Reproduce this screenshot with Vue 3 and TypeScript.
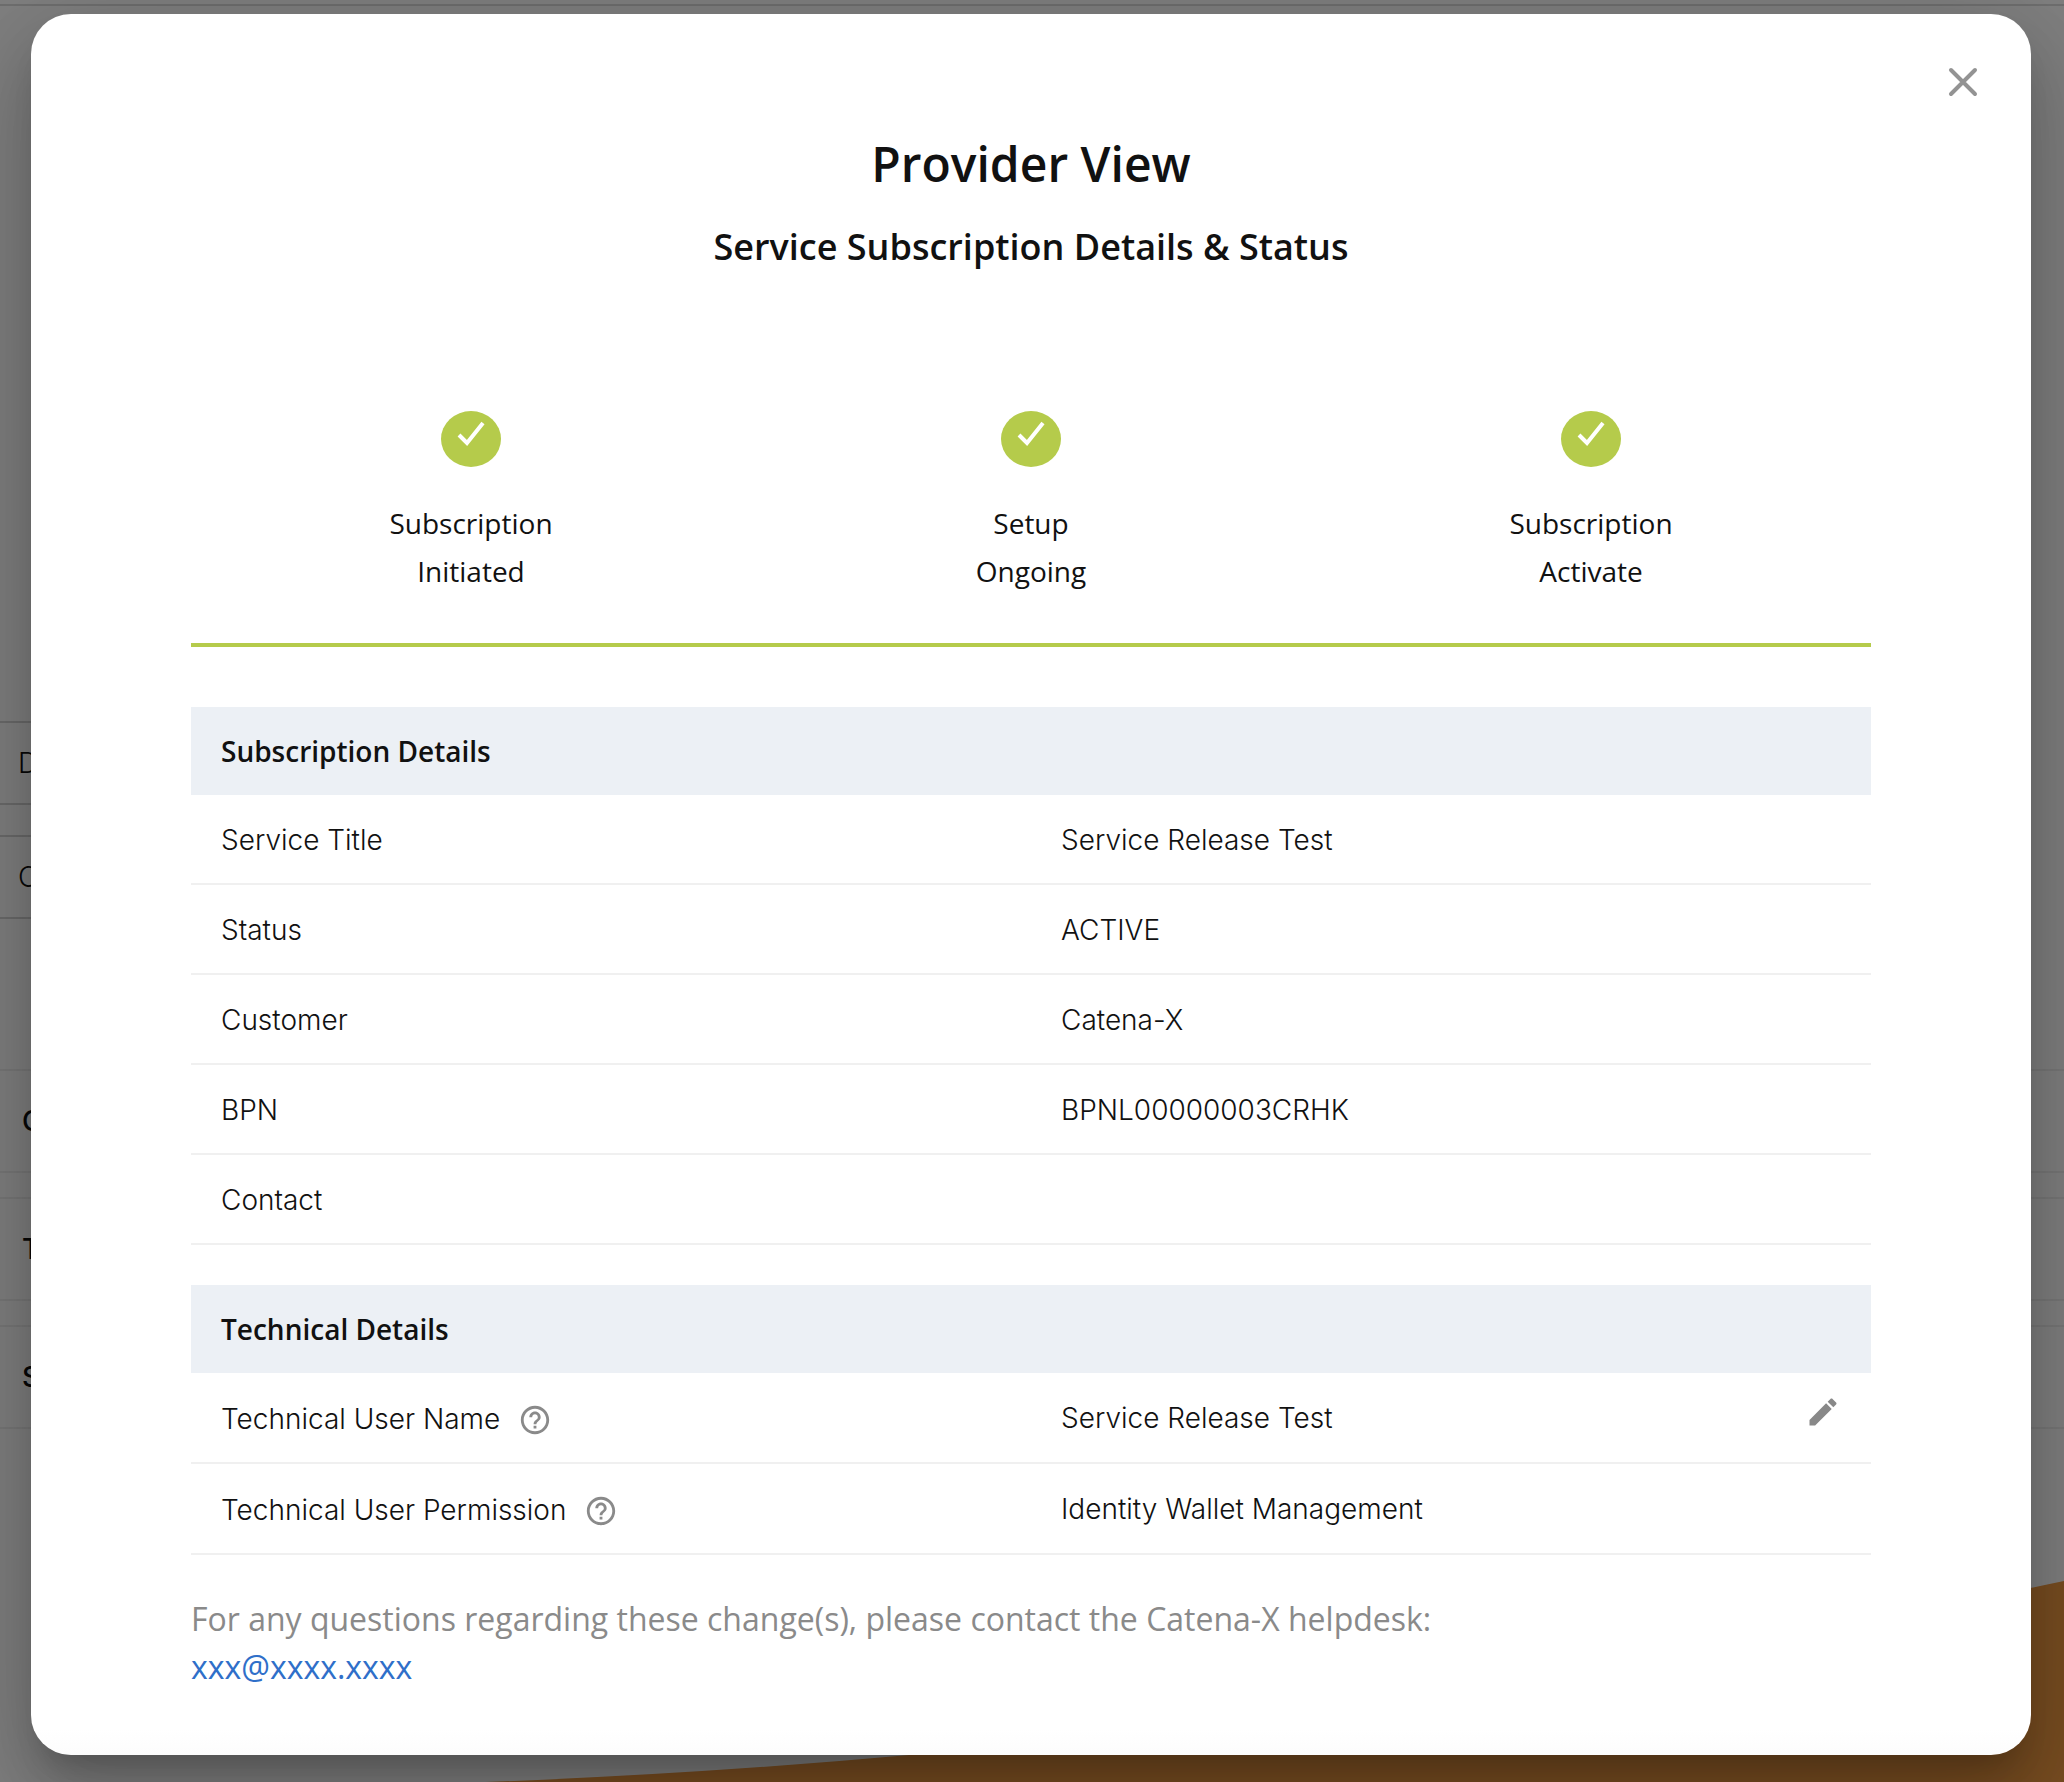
<script setup lang="ts">
interface DetailRow {
  label: string
  value: string
  help?: boolean
  editable?: boolean
}

interface DetailSection {
  title: string
  rows: DetailRow[]
}

const steps: string[][] = [
  ['Subscription', 'Initiated'],
  ['Setup', 'Ongoing'],
  ['Subscription', 'Activate'],
]

const sections: DetailSection[] = [
  {
    title: 'Subscription Details',
    rows: [
      { label: 'Service Title', value: 'Service Release Test' },
      { label: 'Status', value: 'ACTIVE' },
      { label: 'Customer', value: 'Catena-X' },
      { label: 'BPN', value: 'BPNL00000003CRHK' },
      { label: 'Contact', value: '' },
    ],
  },
  {
    title: 'Technical Details',
    rows: [
      { label: 'Technical User Name', value: 'Service Release Test', help: true, editable: true },
      { label: 'Technical User Permission', value: 'Identity Wallet Management', help: true },
    ],
  },
]

const fields: string[] = ['D', 'C']
const panels: string[] = ['C', 'T', 'S']
</script>

<template>
  <div class="page">
    <div class="behind" aria-hidden="true">
      <div class="topbar"></div>
      <div class="fields">
        <div v-for="(field, i) in fields" :key="i" class="field">{{ field }}</div>
      </div>
      <div class="panels">
        <div v-for="(panel, i) in panels" :key="i" class="panel">{{ panel }}</div>
      </div>
      <svg class="swoosh" viewBox="0 0 2064 202" preserveAspectRatio="none">
        <path d="M460 202 Q690 194 909 174 Q1500 118 2064 0 V202 Z" fill="#f09a42" />
      </svg>
    </div>
    <div class="backdrop"></div>

    <div class="container">
      <section class="dialog" role="dialog" aria-modal="true" aria-labelledby="dialog-title">
        <button class="close" type="button" aria-label="Close">
          <svg viewBox="0 0 32 32" width="32" height="32">
            <path d="M4 4 L28 28 M28 4 L4 28" fill="none" stroke="#939393" stroke-width="4" stroke-linecap="round" />
          </svg>
        </button>

        <header class="heading">
          <h1 id="dialog-title">Provider View</h1>
          <h2>Service Subscription Details &amp; Status</h2>
        </header>

        <ol class="steps">
          <li v-for="(step, i) in steps" :key="i" class="step">
            <span class="dot">
              <svg viewBox="0 0 60 56" width="60" height="56">
                <path d="M18 24 L26 32 L42 12" fill="none" stroke="#fff" stroke-width="4" />
              </svg>
            </span>
            <span v-for="word in step" :key="word" class="word">{{ word }}</span>
          </li>
        </ol>

        <table v-for="section in sections" :key="section.title" class="details">
          <thead>
            <tr>
              <th colspan="2" scope="colgroup">{{ section.title }}</th>
            </tr>
          </thead>
          <tbody>
            <tr v-for="row in section.rows" :key="row.label">
              <th scope="row">
                <div class="cell" :class="{ 'with-help': row.help }">
                  <span>{{ row.label }}</span>
                  <svg v-if="row.help" class="help" viewBox="0 0 24 24" width="34" height="34">
                    <path
                      fill="#8a8a8a"
                      d="M11 18h2v-2h-2v2zm1-16C6.480 2 2 6.480 2 12s4.480 10 10 10 10-4.480 10-10S17.520 2 12 2zm0 18c-4.410 0-8-3.590-8-8s3.590-8 8-8 8 3.590 8 8-3.590 8-8 8zm0-14c-2.210 0-4 1.790-4 4h2c0-1.100.9-2 2-2s2 .9 2 2c0 2-3 1.750-3 5h2c0-2.250 3-2.500 3-5 0-2.210-1.790-4-4-4z"
                    />
                  </svg>
                </div>
              </th>
              <td>
                <div class="cell">
                  <span>{{ row.value }}</span>
                  <button v-if="row.editable" class="edit" type="button" aria-label="Edit technical user name">
                    <svg viewBox="0 0 24 24" width="36" height="36">
                      <path
                        fill="#888"
                        d="M3 17.250V21h3.750L17.810 9.940l-3.750-3.750L3 17.250zM20.710 7.040c.39-.39.39-1.020 0-1.410l-2.340-2.340c-.39-.39-1.020-.39-1.410 0l-1.830 1.830 3.750 3.750 1.830-1.830z"
                      />
                    </svg>
                  </button>
                </div>
              </td>
            </tr>
          </tbody>
        </table>

        <p class="contact">
          For any questions regarding these change(s), please contact the Catena-X helpdesk:<br />
          <a href="mailto:xxx@xxxx.xxxx">xxx@xxxx.xxxx</a>
        </p>
      </section>
    </div>
  </div>
</template>

<style>
body {
  margin: 0;
}
</style>

<style scoped>
.page {
  display: grid;
  min-height: 100vh;
  overflow: hidden;
  background: #fff;
  color: #111;
  font-family: "Open Sans", "Liberation Sans", sans-serif;
  font-size: 28px;
  line-height: 48px;
}

.page > * {
  grid-area: 1 / 1;
  min-width: 0;
}

.behind {
  position: relative;
  font-family: Inter, "Liberation Sans", sans-serif;
  font-weight: 300;
}

.topbar {
  height: 4px;
  border-bottom: 2px solid #dcdcdc;
}

.fields {
  display: grid;
  gap: 30px;
  width: 50%;
  padding-top: 715px;
}

.field {
  box-sizing: border-box;
  height: 84px;
  padding: 16px 18px;
  border: solid #d4d4d4;
  border-width: 2px 0;
}

.panels {
  display: grid;
  gap: 24px;
  padding-top: 150px;
  font-weight: 500;
}

.panel {
  box-sizing: border-box;
  height: 104px;
  padding: 26px 22px;
  border: solid #efefef;
  border-width: 2px 0;
}

.swoosh {
  position: absolute;
  right: 0;
  bottom: 0;
  width: 100%;
  height: 202px;
}

.backdrop {
  position: relative;
  background: rgba(0, 0, 0, 0.5);
}

.container {
  position: relative;
  padding: 14px 33px 28px 31px;
}

.dialog {
  position: relative;
  padding: 120px 160px 64px;
  border-radius: 40px;
  background: linear-gradient(to top, #fcfcfc, #fff 26px);
  box-shadow:
    0 22px 30px -14px rgba(0, 0, 0, 0.2),
    0 48px 76px 6px rgba(0, 0, 0, 0.14),
    0 18px 92px 16px rgba(0, 0, 0, 0.12);
}

button {
  display: block;
  padding: 0;
  border: 0;
  background: none;
  cursor: pointer;
}

svg {
  display: block;
}

.close {
  position: absolute;
  top: 52px;
  right: 52px;
}

.heading {
  text-align: center;
}

h1,
h2 {
  margin: 0;
  font-weight: 600;
}

h1 {
  font-size: 48px;
  line-height: 60px;
}

h2 {
  margin-top: 29px;
  font-size: 36px;
}

.steps {
  display: grid;
  grid-template-columns: repeat(3, 1fr);
  margin: 140px 0 60px;
  padding: 0 0 48px;
  border-bottom: 4px solid #b5cb4b;
  list-style: none;
  font-weight: 500;
}

.step {
  display: grid;
  justify-items: center;
}

.dot {
  margin-bottom: 32px;
  border-radius: 50%;
  background: #b5cb4b;
}

.details {
  width: 100%;
  margin-bottom: 40px;
  border-collapse: collapse;
  table-layout: fixed;
}

.details th,
.details td {
  padding: 20px 30px;
  text-align: left;
  vertical-align: top;
  font-weight: 300;
}

.details thead th {
  background: #ecf0f5;
  font-weight: 600;
}

.details tbody {
  font-family: Inter, "Liberation Sans", sans-serif;
}

.details tbody th,
.details tbody td {
  padding-top: 21px;
  padding-bottom: 19px;
}

.details tbody tr {
  border-bottom: 2px solid #f0f0f0;
}

.cell {
  display: flex;
  align-items: center;
  min-height: 48px;
}

.with-help {
  min-height: 49px;
}

.help {
  margin-top: 2px;
  margin-left: 18px;
}

.edit {
  align-self: flex-start;
  margin-left: auto;
}

.contact {
  margin: 0;
  color: #8a8a8a;
  font-size: 32px;
}

.contact a {
  color: #2f6fc9;
  text-decoration: none;
}
</style>
